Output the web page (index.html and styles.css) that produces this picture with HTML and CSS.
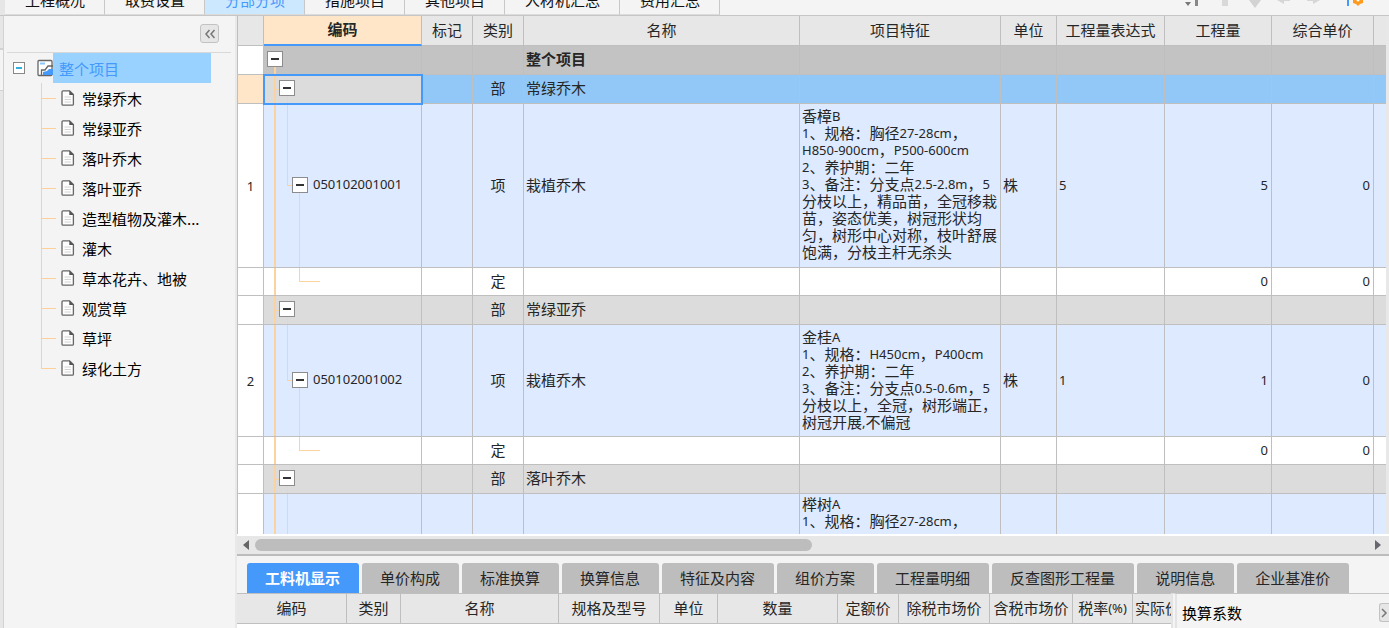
FILE: index.html
```html
<!DOCTYPE html>
<html lang="zh-CN">
<head>
<meta charset="utf-8">
<title>分部分项</title>
<link rel="stylesheet" href="styles.css">
</head>
<body>
<svg width="0" height="0" class="defs" aria-hidden="true">
  <symbol id="doc" viewBox="0 0 14 16">
    <path d="M2 .8h6.6L12.4 4.6v9.6q0 1-1 1H2q-1 0-1-1V1.800q0-1 1-1z" fill="#fdfdfd" stroke="#666" stroke-width="1.300"/>
    <path d="M8.300.5v4.600h4.500z" fill="#555"/>
    <path d="M3.500 7h6.500M3.500 9.500h6.500M3.500 12h6.500" stroke="#d4d4d4"/>
  </symbol>
</svg>
<div class="app">
  <header class="topbar">
    <nav class="pages">
      <button>工程概况</button><button>取费设置</button><button class="on">分部分项</button><button>措施项目</button><button>其他项目</button><button>人材机汇总</button><button>费用汇总</button>
    </nav>
    <svg class="tools" width="219" height="15" viewBox="0 0 219 15" aria-hidden="true">
      <path d="M15 2h6l-3 4z" fill="#777"/><path d="M25 0h3v6h-3z" fill="#888"/>
      <path d="M52 0h6v6h-6z" fill="#d9d9d9"/>
      <path d="M79 0h12l-6 8z" fill="#d3d3d3"/>
      <path d="M107 0l7 4V1h6V0zM150 0l-7 4V1h-6V0z" fill="#d6d6d6"/>
      <path d="M177 0h2v6h-2z" fill="#4499fb"/>
      <path d="M183 0h10v3l-3 1-2 2-2-2-3-1z" fill="#ff9a1f"/><circle cx="188" cy="0" r="1.500" fill="#fff"/>
    </svg>
  </header>
  <div class="body">
    <div class="edge"><span></span></div>
    <aside class="side">
      <div class="sidehead">
        <button class="fold" aria-label="收起"><svg width="12" height="10" viewBox="0 0 12 10"><path d="M5.500 1L2 5l3.500 4M10.500 1L7 5l3.500 4" fill="none" stroke="#777" stroke-width="1.500"/></svg></button>
      </div>
      <div class="root">
        <button class="mini" aria-label="折叠"></button>
        <svg width="17" height="18" viewBox="0 0 17 18" aria-hidden="true"><path d="M1 2.500q0-1 1-1h12q1 0 1 1v13q0 1-1 1H2q-1 0-1-1z" fill="#fff" stroke="#666" stroke-width="1.300"/><path d="M3 4.500h5" stroke="#8cc6ff" stroke-width="2"/><path d="M4.500 16v-5H8l3-4h5" fill="none" stroke="#666" stroke-width="1.300"/><path d="M6 16v-3l4-1 2-2h4v6z" fill="#4499fb"/></svg>
        <a href="#all">整个项目</a>
      </div>
      <ul class="tree">
        <li><svg><use href="#doc"/></svg>常绿乔木</li>
        <li><svg><use href="#doc"/></svg>常绿亚乔</li>
        <li><svg><use href="#doc"/></svg>落叶乔木</li>
        <li><svg><use href="#doc"/></svg>落叶亚乔</li>
        <li><svg><use href="#doc"/></svg>造型植物及灌木...</li>
        <li><svg><use href="#doc"/></svg>灌木</li>
        <li><svg><use href="#doc"/></svg>草本花卉、地被</li>
        <li><svg><use href="#doc"/></svg>观赏草</li>
        <li><svg><use href="#doc"/></svg>草坪</li>
        <li><svg><use href="#doc"/></svg>绿化土方</li>
      </ul>
    </aside>
    <main class="main">
      <div class="gridwrap">
        <table class="grid">
          <colgroup><col class="c0"><col class="c1"><col class="c2"><col class="c2"><col><col class="c5"><col class="c6"><col class="c7"><col class="c8"><col class="c9"><col class="c10"></colgroup>
          <thead>
            <tr><th></th><th class="cur">编码</th><th>标记</th><th>类别</th><th>名称</th><th>项目特征</th><th>单位</th><th>工程量表达式</th><th>工程量</th><th>综合单价</th><th></th></tr>
          </thead>
          <tbody>
            <tr class="total"><td></td><td class="l0"><button class="box" aria-label="折叠"></button></td><td></td><td></td><td>整个项目</td><td></td><td></td><td></td><td></td><td></td><td></td></tr>
            <tr class="part sel"><td></td><td class="l1"><button class="box" aria-label="折叠"></button></td><td></td><td>部</td><td>常绿乔木</td><td></td><td></td><td></td><td></td><td></td><td></td></tr>
            <tr class="item tall"><td>1</td><td class="l2"><div><button class="box" aria-label="折叠"></button><b>050102001001</b></div></td><td></td><td>项</td><td>栽植乔木</td>
              <td class="desc">香樟<b>B</b><br><b>1</b>、规格：胸径<b>27-28cm</b>，<br><b>H850-900cm</b>，<b>P500-600cm</b><br><b>2</b>、养护期：二年<br><b>3</b>、备注：分支点<b>2.5-2.8m</b>，<b>5</b><br>分枝以上，精品苗，全冠移栽<br>苗，姿态优美，树冠形状均<br>匀，树形中心对称，枝叶舒展<br>饱满，分枝主杆无杀头</td>
              <td>株</td><td><b>5</b></td><td><b>5</b></td><td><b>0</b></td><td></td></tr>
            <tr class="norm"><td></td><td class="l3"></td><td></td><td>定</td><td></td><td></td><td></td><td></td><td><b>0</b></td><td><b>0</b></td><td></td></tr>
            <tr class="part"><td></td><td class="l1"><button class="box" aria-label="折叠"></button></td><td></td><td>部</td><td>常绿亚乔</td><td></td><td></td><td></td><td></td><td></td><td></td></tr>
            <tr class="item mid"><td>2</td><td class="l2"><div><button class="box" aria-label="折叠"></button><b>050102001002</b></div></td><td></td><td>项</td><td>栽植乔木</td>
              <td class="desc">金桂<b>A</b><br><b>1</b>、规格：<b>H450cm</b>，<b>P400cm</b><br><b>2</b>、养护期：二年<br><b>3</b>、备注：分支点<b>0.5-0.6m</b>，<b>5</b><br>分枝以上，全冠，树形端正，<br>树冠开展<b>,</b>不偏冠</td>
              <td>株</td><td><b>1</b></td><td><b>1</b></td><td><b>0</b></td><td></td></tr>
            <tr class="norm"><td></td><td class="l3"></td><td></td><td>定</td><td></td><td></td><td></td><td></td><td><b>0</b></td><td><b>0</b></td><td></td></tr>
            <tr class="part"><td></td><td class="l1"><button class="box" aria-label="折叠"></button></td><td></td><td>部</td><td>落叶乔木</td><td></td><td></td><td></td><td></td><td></td><td></td></tr>
            <tr class="item mid"><td></td><td class="l2 more"></td><td></td><td></td><td></td><td class="desc top">榉树<b>A</b><br><b>1</b>、规格：胸径<b>27-28cm</b>，</td><td></td><td></td><td></td><td></td><td></td></tr>
          </tbody>
        </table>
      </div>
      <div class="hscroll">
        <svg width="7" height="12" viewBox="0 0 7 12"><path d="M6 1v10L0 6z" fill="#666"/></svg>
        <div class="track"><div class="thumb"></div></div>
        <svg width="7" height="12" viewBox="0 0 7 12"><path d="M1 1v10l6-5z" fill="#66666e"/></svg>
      </div>
      <nav class="tabs">
        <button class="on">工料机显示</button><button>单价构成</button><button>标准换算</button><button>换算信息</button><button>特征及内容</button><button>组价方案</button><button>工程量明细</button><button>反查图形工程量</button><button>说明信息</button><button>企业基准价</button>
      </nav>
      <div class="detail">
        <div class="detailwrap">
          <table class="sub">
            <colgroup><col class="s0"><col class="s1"><col class="s2"><col class="s3"><col class="s4"><col class="s5"><col class="s6"><col class="s7"><col class="s8"><col class="s9"><col class="s10"></colgroup>
            <thead><tr><th>编码</th><th>类别</th><th>名称</th><th>规格及型号</th><th>单位</th><th>数量</th><th>定额价</th><th>除税市场价</th><th>含税市场价</th><th>税率<b>(%)</b></th><th class="start">实际价</th></tr></thead>
          </table>
        </div>
        <section class="factor"><span>换算系数</span><button aria-label="展开"><svg width="8" height="10" viewBox="0 0 8 10"><path d="M2 1l4 4-4 4" fill="none" stroke="#777" stroke-width="1.500"/></svg></button></section>
      </div>
    </main>
  </div>
</div>
</body>
</html>
```
FILE: styles.css
```css
* { box-sizing: border-box; }
body { margin: 0; font: 15px/18px "Noto Sans CJK SC", sans-serif; color: #262626; background: #f4f4f4; }
button { font: inherit; color: inherit; margin: 0; padding: 0; border: 0; background: none; white-space: nowrap; }
svg { display: block; flex: none; }
.defs { position: absolute; }
.app { height: 100vh; display: flex; flex-direction: column; overflow: hidden; }

.topbar { height: 16px; flex: none; display: flex; align-items: flex-end; justify-content: space-between; overflow: hidden; border-bottom: 1px solid #c6c6c6; }
.pages { display: flex; padding-left: 5px; background: #e6e6e6; }
.pages button { height: 30px; padding: 0 19px 0 20px; background: #f4f4f4; border-right: 1px solid #c8c8c8; border-bottom: 1px solid #dcdcdc; color: #111; }
.pages .on { background: #cce8ff; color: #4499fb; }

.body { flex: 1; min-height: 0; display: flex; }
.edge { width: 4px; flex: none; background: #e6e6e6; border-right: 1px solid #d2d2d2; }
.edge span { display: block; margin-top: 32px; height: 43px; background: #f4f4f4; border: solid #d2d2d2; border-width: 2px 0 1px; }
.side { width: 233px; flex: none; border-right: 2px solid #e9e9e9; color: #000; }
.sidehead { height: 37px; margin: 0 4px 0 3px; padding: 8px 12px 0 0; display: flex; justify-content: flex-end; border-bottom: 1px solid #d8d8d8; }
.fold { width: 19px; height: 19px; display: flex; align-items: center; justify-content: center; background: #e6e6e6; border: 1px solid #c2c2c2; border-radius: 3px; }
.root { height: 30px; display: flex; align-items: center; padding: 0 24px 0 9px; }
.mini { width: 12px; height: 12px; margin-right: 12px; border: 1px solid #888; background: linear-gradient(#2fb0e0, #2fb0e0) center / 6px 2px no-repeat #fff; }
.root a { flex: 1; margin-left: -1px; padding: 1px 0 0 6px; line-height: 29px; background: #99d1ff; color: #4499fb; text-decoration: none; }
.tree { list-style: none; margin: 0 0 0 37px; padding: 0; }
.tree li { height: 30px; padding: 2px 0 0 20px; display: flex; align-items: center; white-space: nowrap;
  background: linear-gradient(#fdd09a, #fdd09a) 0 0 / 1px 100% no-repeat, linear-gradient(#fdd09a, #fdd09a) 0 15px / 15px 1px no-repeat; }
.tree li:last-child { background-size: 1px 15px, 15px 1px; }
.tree svg { width: 14px; height: 16px; margin: 0 7px 2px 0; }

.main { flex: 1; min-width: 0; display: flex; flex-direction: column; }
.gridwrap { flex: 1; min-height: 0; overflow: hidden; border-left: 1px solid #bfbfbf; border-right: 3px solid #e8e8e8; }
table { border-collapse: separate; border-spacing: 0; table-layout: fixed; width: 100%; }
th, td { padding: 0 0 2px; border: solid #bfbfbf; border-width: 0 1px 1px 0; white-space: nowrap; overflow: hidden; }
th { font-weight: 400; height: 30px; background: #e7e7e7; text-align: center; }
b { font: 13px/1 "Noto Sans", sans-serif; vertical-align: 1px; }
.c0 { width: 26px; }
.c1 { width: 158px; }
.c2 { width: 51px; }
.c5 { width: 201px; }
.c6 { width: 56px; }
.c7 { width: 108px; }
.c8 { width: 107px; }
.c9 { width: 102px; }
.c10 { width: 12px; }
.grid th:last-child, .grid td:last-child { border-right: 0; }
.grid th.cur { background: #ffe6c8; font-weight: 700; border-bottom: 2px solid #4499fb; }
.grid td { height: 29px; padding: 0 2px 2px; }
.grid td:first-child { background: #fff; text-align: center; font: 13px/18px "Noto Sans", sans-serif; padding-bottom: 0; }
.grid td:nth-child(4) { text-align: center; }
.grid td:nth-child(9), .grid td:nth-child(10) { text-align: right; padding-right: 3px; }
.grid .desc { line-height: 17px; padding-bottom: 4px; }
.total { background: #c3c3c3; font-weight: 700; }
.part { background: #dcdcdc; }
.item { background: #ddeaff; }
.norm { background: #fff; }
.sel { background: #91c8f8; }
.grid .norm td { height: 28px; }
.grid .tall td { height: 164px; }
.grid .mid td { height: 112px; }
.grid .sel td:first-child { background: #ffe6c8; }
.grid .sel .l1 { position: relative; background-color: #dcdcdc; outline: 2px solid #4499fb; outline-offset: -1px; }
.grid .top { vertical-align: top; padding-top: 1px; }
.box { display: block; flex: none; width: 16px; height: 16px; border: 1px solid #8c8c8c; background: linear-gradient(#333, #333) center / 8px 2px no-repeat #fff; }

/* outline connectors of the code column, one rule per depth */
.l0, .l1, .l2, .l3 { --v: linear-gradient(#fbd3a0, #fbd3a0); background-repeat: no-repeat; }
.grid .l0 { padding-left: 3px; background-image: var(--v); background-size: 2px 50%; background-position: 10px 100%; }
.grid .l1 { padding-left: 15px; background-image: var(--v), var(--v), var(--v); background-size: 2px 100%, 5px 1px, 1px 50%; background-position: 10px 0, 11px 50%, 23px 100%; }
.grid .l2 { padding-left: 28px; background-image: var(--v), var(--v), var(--v), var(--v); background-size: 2px 100%, 1px 50%, 5px 1px, 1px 50%; background-position: 10px 0, 23px 0, 23px 50%, 35px 100%; }
.grid .l3 { background-image: var(--v), var(--v), var(--v); background-size: 2px 100%, 1px 50%, 21px 1px; background-position: 10px 0, 35px 0, 35px 50%; }
.grid .more { background-size: 2px 100%, 1px 100%, 0 0, 0 0; }
.l2 div { display: flex; align-items: center; gap: 5px; }

.hscroll { height: 22px; flex: none; display: flex; align-items: center; gap: 5px; padding: 0 8px 0 6px; background: #e7e7e7; border: solid #bcbcbc; border-width: 2px 0; border-top-color: #fff; }
.track { flex: 1; }
.thumb { width: 50%; height: 12px; border-radius: 6px; background: #bdbdbd; }
.tabs { flex: none; display: flex; gap: 3px; padding: 7px 10px 0; }
.tabs button { height: 30px; padding: 0 19px 0 18px; background: #bdbdbd; border-radius: 3px 3px 0 0; }
.tabs .on { background: #4499fb; color: #fff; font-weight: 700; }
.detail { height: 35px; flex: none; display: flex; }
.detailwrap { flex: 1; min-width: 0; overflow: hidden; background: #fff; border-top: 1px solid #bfbfbf; }
.sub { width: 955px; }
.s0 { width: 110px; }
.s1 { width: 54px; }
.s2 { width: 158px; }
.s3 { width: 101px; }
.s4 { width: 58px; }
.s5 { width: 120px; }
.s6 { width: 61px; }
.s7 { width: 91px; }
.s8 { width: 83px; }
.s9 { width: 60px; }
.s10 { width: 59px; }
.sub .start { text-align: left; padding-left: 2px; }
.factor { width: 218px; flex: none; display: flex; align-items: center; justify-content: space-between; padding: 3px 0 0 5px; border: solid #c4c4c4; border-width: 1px 0 0; border-left: 6px double #e4e4e4; color: #000; }
.factor button { width: 10px; height: 19px; overflow: hidden; display: flex; align-items: center; background: #e6e6e6; border: 1px solid #c2c2c2; border-right: 0; border-radius: 3px 0 0 3px; }
```
